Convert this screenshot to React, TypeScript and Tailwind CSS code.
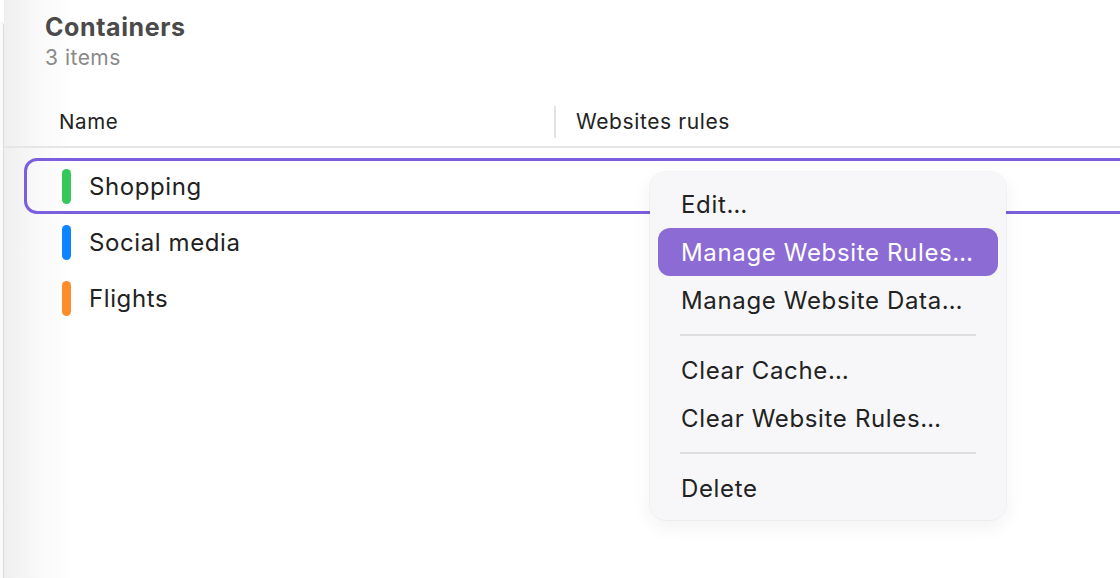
import React from "react";

const rows = [
  { name: "Shopping", bar: "bg-[#34c759]", selected: true },
  { name: "Social media", bar: "bg-[#0a84ff]", selected: false },
  { name: "Flights", bar: "bg-[#ff8c2a]", selected: false },
];

type MenuEntry = { label: string; active?: boolean } | "sep";

const menu: MenuEntry[] = [
  { label: "Edit…" },
  { label: "Manage Website Rules…", active: true },
  { label: "Manage Website Data…" },
  "sep",
  { label: "Clear Cache…" },
  { label: "Clear Website Rules…" },
  "sep",
  { label: "Delete" },
];

export default function App() {
  return (
    <div className="relative flex h-[578px] w-[1120px] overflow-hidden bg-white font-['Inter','Liberation_Sans',sans-serif] text-[#222]">
      {/* sidebar edge */}
      <div className="mt-[22px] w-[4px] shrink-0 rounded-tr-[6px] border-r border-[#dcdcdc] bg-[#fbfbfb]" />

      <main className="flex min-w-0 flex-1 flex-col bg-[linear-gradient(to_right,#efefef_0px,#f8f8f8_30px,#ffffff_68px)]">
        {/* title */}
        <div className="pl-[41px] pt-[13px]">
          <h1 className="text-[25px] leading-[28px] font-bold tracking-[0.6px] text-[#4a4a4a]">Containers</h1>
          <p className="mt-[5px] text-[21px] leading-[24px] tracking-[0.5px] text-[#8a8a8a]">3 items</p>
        </div>

        {/* table header */}
        <div className="mt-[28px] flex h-[50px] items-center border-b-2 border-[#e6e6e6]">
          <div className="w-[550px] shrink-0 pl-[55px] text-[20.5px] tracking-[0.6px]">Name</div>
          <div className="h-[32px] w-[2px] bg-[#e3e3e3]" />
          <div className="pl-[20px] text-[21px] tracking-[0.6px]">Websites rules</div>
        </div>

        {/* rows */}
        <div className="mt-[10px] flex flex-col">
          {rows.map((r) => (
            <div
              key={r.name}
              className={`ml-[20px] mr-[-40px] flex h-[56px] items-center gap-[18px] rounded-[13px] border-[3px] pl-[35px] ${
                r.selected ? "border-[#7b5fde]" : "border-transparent"
              }`}
            >
              <span className={`h-[35px] w-[9px] rounded-full ${r.bar}`} />
              <span className="pt-[1px] text-[24px] tracking-[0.6px]">{r.name}</span>
            </div>
          ))}
        </div>
      </main>

      {/* context menu */}
      <div className="absolute left-[650px] top-[172px] flex w-[356px] flex-col rounded-[16px] bg-[#f7f7f9] p-[8px] shadow-[0_0_0_1px_rgba(0,0,0,0.03),0_6px_20px_rgba(0,0,0,0.06)]">
        {menu.map((m, i) =>
          m === "sep" ? (
            <div key={i} className="mx-[22px] my-[10px] h-[2px] bg-[#dedede]" />
          ) : (
            <div
              key={i}
              className={`flex h-[48px] items-center rounded-[12px] pl-[23px] pt-[1px] text-[24px] tracking-[0.65px] ${
                m.active ? "bg-[#8d6bd5] text-white" : "text-[#222]"
              }`}
            >
              {m.label}
            </div>
          )
        )}
      </div>
    </div>
  );
}
